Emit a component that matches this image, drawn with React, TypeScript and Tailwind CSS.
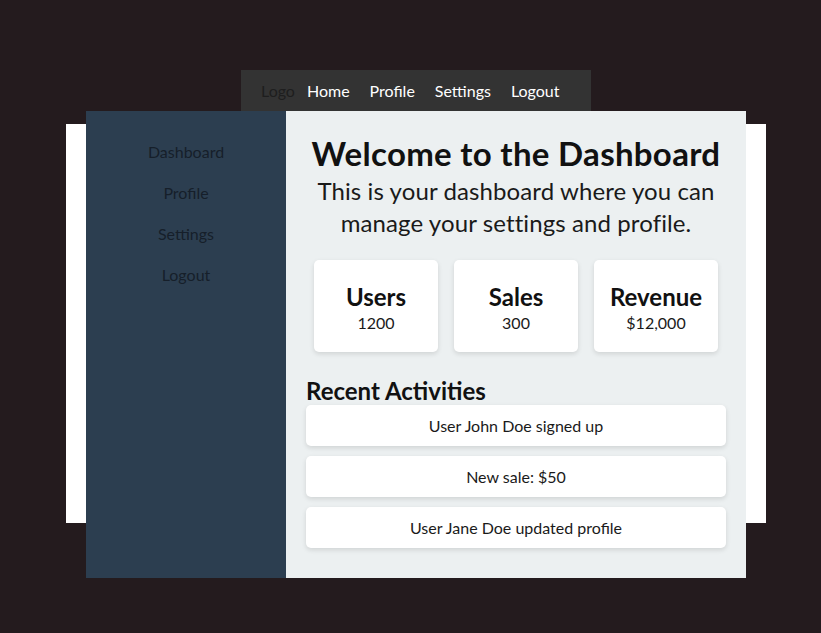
import React from 'react';

const navLinks = ['Home', 'Profile', 'Settings', 'Logout'];
const sideLinks = ['Dashboard', 'Profile', 'Settings', 'Logout'];
const stats = [
    { label: 'Users', value: '1200' },
    { label: 'Sales', value: '300' },
    { label: 'Revenue', value: '$12,000' },
];
const activities = ['User John Doe signed up', 'New sale: $50', 'User Jane Doe updated profile'];

export default function App() {
    return (
        <div
            className="min-h-[633px] w-full bg-[#241b1e] pt-[70px] pl-[66px]"
            style={{ fontFamily: 'Lato, "Noto Sans", sans-serif' }}
        >
            <div className="relative w-[700px]">
                {/* white backdrop */}
                <div className="absolute left-0 right-0 top-[54px] h-[399px] bg-white" />

                <div className="relative">
                    {/* Top nav */}
                    <header className="mx-auto flex h-[41px] w-[350px] items-center bg-[#333333] px-5 text-[16px]">
                        <span className="mr-[2px] text-[#1e1e1e]">Logo</span>
                        <nav className="flex">
                            {navLinks.map((link) => (
                                <a key={link} className="mx-[10px] text-white">
                                    {link}
                                </a>
                            ))}
                        </nav>
                    </header>

                    <div className="mx-5 flex w-[660px]">
                        {/* Sidebar */}
                        <aside className="w-[200px] shrink-0 bg-[#2c3e50] p-5">
                            <ul>
                                {sideLinks.map((link) => (
                                    <li key={link} className="p-[10px] text-center text-[16px] leading-[21px] text-[#161f2a]">
                                        {link}
                                    </li>
                                ))}
                            </ul>
                        </aside>

                        {/* Main */}
                        <main className="flex-1 bg-[#ecf0f1] px-5 pt-[21px] pb-5 text-[#111]">
                            <h1 className="text-center text-[33px] font-bold leading-[43px] tracking-[0.3px]">
                                Welcome to the Dashboard
                            </h1>
                            <p className="text-center text-[24px] leading-[32px] tracking-[0.1px] text-[#1a1a1a]">
                                This is your dashboard where you can manage your settings and profile.
                            </p>

                            <div className="mt-[21px] flex gap-4 px-2">
                                {stats.map((s) => (
                                    <div
                                        key={s.label}
                                        className="flex h-[92px] flex-1 flex-col items-center rounded-[5px] bg-white pt-[22px] shadow-[0_2px_5px_rgba(0,0,0,0.12)]"
                                    >
                                        <h3 className="text-[24px] font-bold leading-[30px]">{s.label}</h3>
                                        <p className="text-[16px] leading-[21px] text-[#1a1a1a]">{s.value}</p>
                                    </div>
                                ))}
                            </div>

                            <h2 className="mt-[25px] text-[24px] font-bold leading-[28px]">Recent Activities</h2>
                            <ul className="flex flex-col gap-[10px] pb-[10px]">
                                {activities.map((a) => (
                                    <li
                                        key={a}
                                        className="rounded-[5px] bg-white py-[10px] text-center text-[16px] leading-[21px] text-[#1a1a1a] shadow-[0_2px_5px_rgba(0,0,0,0.12)]"
                                    >
                                        {a}
                                    </li>
                                ))}
                            </ul>
                        </main>
                    </div>
                </div>
            </div>
        </div>
    );
}
